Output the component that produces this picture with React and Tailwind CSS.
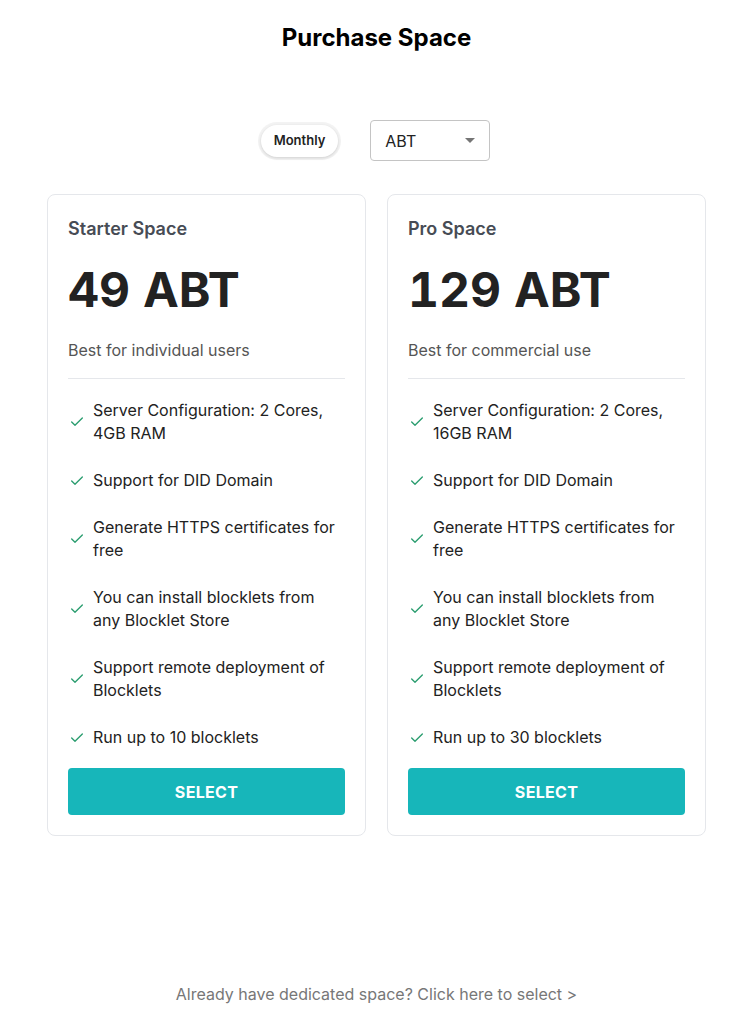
import { Check } from 'lucide-react';

const plans = [
    {
        name: 'Starter Space',
        price: '49 ABT',
        desc: 'Best for individual users',
        features: [
            'Server Configuration: 2 Cores, 4GB RAM',
            'Support for DID Domain',
            'Generate HTTPS certificates for free',
            'You can install blocklets from any Blocklet Store',
            'Support remote deployment of Blocklets',
            'Run up to 10 blocklets',
        ],
    },
    {
        name: 'Pro Space',
        price: '129 ABT',
        desc: 'Best for commercial use',
        features: [
            'Server Configuration: 2 Cores, 16GB RAM',
            'Support for DID Domain',
            'Generate HTTPS certificates for free',
            'You can install blocklets from any Blocklet Store',
            'Support remote deployment of Blocklets',
            'Run up to 30 blocklets',
        ],
    },
];

function PlanCard({ plan }) {
    return (
        <div className="flex-1 border border-[#e5e7eb] rounded-lg p-5 flex flex-col">
            <div className="text-[18px] leading-[24px] font-semibold text-[#474c55] mt-[2px]">{plan.name}</div>
            <div className="text-[48px] leading-[60px] font-bold text-[#222] mt-[19px] tabular-nums">{plan.price}</div>
            <div className="text-[16px] leading-[22px] text-[#555] mt-[19px]">{plan.desc}</div>
            <div className="h-px bg-[#e5e7eb] mt-[17px]" />
            <ul className="flex flex-col gap-[24px] mt-[20px]">
                {plan.features.map((f) => (
                    <li key={f} className="flex items-center gap-[8px]">
                        <Check size={16} strokeWidth={2} className="text-[#2a9d6f] shrink-0 ml-[1px]" />
                        <span className="text-[16px] leading-[23px] text-[#222]">{f}</span>
                    </li>
                ))}
            </ul>
            <button className="mt-[19px] h-[47px] rounded bg-[#17b6ba] text-white font-bold text-[16px] tracking-[0.3px]">
                SELECT
            </button>
        </div>
    );
}

export default function App() {
    return (
        <div className="w-[736px] h-[1033px] overflow-hidden bg-white">
            <div className="w-[753px] h-[1033px] flex flex-col font-['Inter',sans-serif]">
                <h1 className="text-center text-[24px] leading-[32px] font-bold text-black mt-[22px]">Purchase Space</h1>

                <div className="flex justify-center items-center gap-[29px] mt-[66px] ml-[-5px]">
                    <div className="rounded-full bg-[#f3f3f3] p-[3px]">
                        <div className="rounded-full bg-white shadow-[0_1px_3px_rgba(0,0,0,0.15)] px-[13px] h-[32px] flex items-center text-[13px] font-semibold text-[#222]">
                            Monthly
                        </div>
                    </div>
                    <div className="w-[120px] h-[41px] border border-[#c4c4c4] rounded flex items-center justify-between pl-[14px] pr-[14px]">
                        <span className="text-[16px] text-[#222]">ABT</span>
                        <svg width="10" height="5" viewBox="0 0 10 5"><path d="M0 0 L10 0 L5 5 Z" fill="#757575" /></svg>
                    </div>
                </div>

                <div className="flex gap-[21px] px-[47px] mt-[33px]">
                    {plans.map((p) => (
                        <PlanCard key={p.name} plan={p} />
                    ))}
                </div>

                <div className="mt-auto mb-[27px] text-center text-[16px] text-[#777]">
                    Already have dedicated space? Click here to select &gt;
                </div>
            </div>
        </div>
    );
}
